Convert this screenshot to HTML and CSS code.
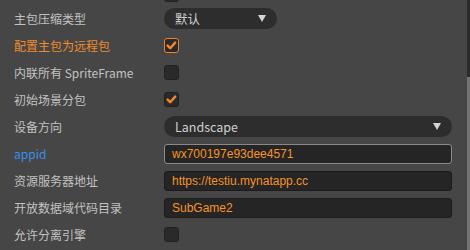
FILE: index.html
```html
<!DOCTYPE html>
<html lang="zh-CN">
<head>
    <meta charset="UTF-8">
    <meta name="viewport" content="width=device-width, initial-scale=1.0">
    <title>构建发布</title>
    <link rel="stylesheet" href="styles.css">
</head>
<body>
    <div class="window">
        <div class="panel">
            <div class="row partial">
                <label class="label"></label>
                <div class="value">
                    <span class="checkbox"></span>
                    <span class="check-text">调试</span>
                </div>
            </div>
            <div class="row">
                <label class="label">主包压缩类型</label>
                <div class="value">
                    <div class="select short">
                        <span>默认</span>
                        <span class="arrow"></span>
                    </div>
                </div>
            </div>
            <div class="row">
                <label class="label modified">配置主包为远程包</label>
                <div class="value">
                    <span class="checkbox checked focus">
                        <svg viewBox="0 0 15 15" width="15" height="15"><polyline points="3.6,7.6 6.2,10.2 11.2,4.6"/></svg>
                    </span>
                </div>
            </div>
            <div class="row">
                <label class="label">内联所有 SpriteFrame</label>
                <div class="value">
                    <span class="checkbox"></span>
                </div>
            </div>
            <div class="row">
                <label class="label">初始场景分包</label>
                <div class="value">
                    <span class="checkbox checked">
                        <svg viewBox="0 0 15 15" width="15" height="15"><polyline points="3.6,7.6 6.2,10.2 11.2,4.6"/></svg>
                    </span>
                </div>
            </div>
            <div class="row">
                <label class="label">设备方向</label>
                <div class="value">
                    <div class="select">
                        <span>Landscape</span>
                        <span class="arrow"></span>
                    </div>
                </div>
            </div>
            <div class="row">
                <label class="label required">appid</label>
                <div class="value">
                    <input class="field active" type="text" value="wx700197e93dee4571">
                </div>
            </div>
            <div class="row">
                <label class="label">资源服务器地址</label>
                <div class="value">
                    <input class="field" type="text" value="https://testiu.mynatapp.cc">
                </div>
            </div>
            <div class="row">
                <label class="label">开放数据域代码目录</label>
                <div class="value">
                    <input class="field" type="text" value="SubGame2">
                </div>
            </div>
            <div class="row">
                <label class="label">允许分离引擎</label>
                <div class="value">
                    <span class="checkbox"></span>
                </div>
            </div>
        </div>
        <div class="scrollbar">
            <div class="thumb"></div>
        </div>
    </div>
</body>
</html>
```

FILE: styles.css
```css
html, body {
    margin: 0;
    height: 100%;
}

body {
    background: #464646;
    font-family: "Noto Sans CJK SC", "Liberation Sans", sans-serif;
    font-size: 12px;
    color: #c2c2c2;
    overflow: hidden;
}

.window {
    display: flex;
    height: 250px;
}

.panel {
    flex: 1;
    margin-top: -22px;
    padding-right: 15px;
}

.row {
    display: flex;
    align-items: center;
    height: 27px;
}

.label {
    width: 150px;
    padding-left: 14px;
    line-height: 16px;
    white-space: nowrap;
}

.label.modified {
    color: #f08a2a;
}

.label.required {
    color: #3790ec;
}

.value {
    flex: 1;
    display: flex;
    align-items: center;
}

/* row scrolled mostly out of view */
.partial .checkbox {
    margin-top: 6px;
}

.partial .check-text {
    margin-top: 2px;
}

.checkbox {
    display: block;
    width: 13px;
    height: 13px;
    background: #2a2a2a;
    border: 1px solid #212121;
    border-radius: 3px;
    position: relative;
}

.checkbox svg {
    position: absolute;
    left: -1px;
    top: -1px;
}

.checkbox polyline {
    fill: none;
    stroke: #f5872a;
    stroke-width: 2.4;
    stroke-linecap: round;
    stroke-linejoin: round;
}

.checkbox.focus {
    border-color: #e8852c;
}

.check-text {
    margin-left: 5px;
    color: #c2c2c2;
}

.select {
    flex: 1;
    display: flex;
    align-items: center;
    justify-content: space-between;
    height: 21px;
    padding: 0 11px 0 11px;
    background: #2d2d2d;
    border-radius: 11px;
    color: #d0d0d0;
    font-family: "Liberation Sans", "Noto Sans CJK SC", sans-serif;
    font-size: 13px;
}

.select span:first-child {
    font-family: "Noto Sans CJK SC", sans-serif;
    font-size: 12.5px;
}

.select.short {
    flex: 0 0 auto;
    width: 91px;
}

.arrow {
    width: 0;
    height: 0;
    border-left: 4px solid transparent;
    border-right: 4px solid transparent;
    border-top: 7px solid #d4d4d4;
}

.field {
    flex: 1;
    box-sizing: border-box;
    height: 20px;
    margin: 0;
    padding: 0 7px;
    background: #252525;
    border: 1px solid #1c1c1c;
    border-radius: 3px;
    color: #f59328;
    font-family: "Liberation Sans", sans-serif;
    font-size: 12px;
    outline: none;
}

.field.active {
    border-color: #8a8a8a;
}

.scrollbar {
    width: 3px;
    display: flex;
    flex-direction: column;
    background: #2b2b2b;
}

.thumb {
    flex: 1;
    margin-top: 77px;
    background: #727272;
}
```
